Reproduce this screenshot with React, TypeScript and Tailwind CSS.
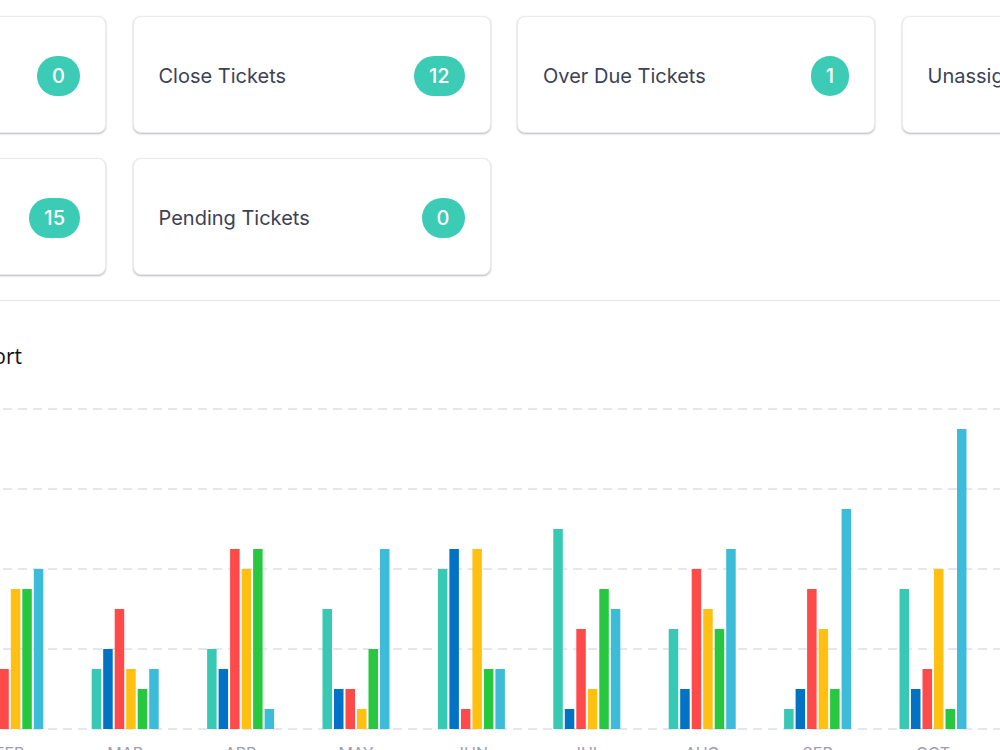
import React from "react";

type Stat = { label: string; count: number };

const topRow: Stat[] = [
  { label: "Open Tickets", count: 0 },
  { label: "Close Tickets", count: 12 },
  { label: "Over Due Tickets", count: 1 },
  { label: "Unassigned Tickets", count: 3 },
];

const bottomRow: Stat[] = [
  { label: "All Tickets", count: 15 },
  { label: "Pending Tickets", count: 0 },
];

const SERIES_COLORS = ["#38c9b4", "#0172c4", "#ff4a4a", "#ffc012", "#27c840", "#3dbcd9"];

const MONTHS = ["JAN", "FEB", "MAR", "APR", "MAY", "JUN", "JUL", "AUG", "SEP", "OCT", "NOV", "DEC"];

// ticket counts per month, one value per status series
const DATA: number[][] = [
  [2, 3, 1, 4, 2, 5],
  [5, 6, 3, 7, 7, 8],
  [3, 4, 6, 3, 2, 3],
  [4, 3, 9, 8, 9, 1],
  [6, 2, 2, 1, 4, 9],
  [8, 9, 1, 9, 3, 3],
  [10, 1, 5, 2, 7, 6],
  [5, 2, 8, 6, 5, 9],
  [1, 2, 7, 5, 2, 11],
  [7, 2, 3, 8, 1, 15],
  [4, 3, 6, 2, 5, 7],
  [3, 5, 2, 6, 4, 8],
];

function StatCard({ label, count }: Stat) {
  return (
    <div className="flex h-[117px] items-center justify-between rounded-[8px] border border-[#e9e9ef] bg-white pl-[25px] pr-[25px] pt-[3px] shadow-[0_1px_2px_rgba(0,0,0,0.28)]">
      <span className="text-[20px] tracking-[0px] text-[#3b4257]">{label}</span>
      <span className="flex h-[40px] min-w-[38px] items-center justify-center rounded-full bg-[#3ccbb4] px-[15px] text-[20px] font-medium text-white">
        {count}
      </span>
    </div>
  );
}

function TicketChart() {
  const width = 1600;
  const height = 400;
  const base = 359; // y of zero line
  const unit = 20; // px per ticket
  const groupStart = 91.7 + 252 - 2 * 115.4;
  const groupPitch = 115.4;
  const barPitch = 11.5;
  const barWidth = 9.5;
  const grid = [39, 119, 199, 279, 359];

  return (
    <svg width={width} height={height} className="block">
      {grid.map((y) => (
        <line
          key={y}
          x1={0}
          x2={width}
          y1={y}
          y2={y}
          stroke="#dedeea"
          strokeWidth={1.5}
          strokeDasharray="9 6"
        />
      ))}
      {DATA.map((vals, m) => {
        const gx = groupStart + m * groupPitch;
        return (
          <g key={MONTHS[m]}>
            {vals.map((v, s) => (
              <rect
                key={s}
                x={gx + s * barPitch}
                y={base - v * unit}
                width={barWidth}
                height={v * unit}
                fill={SERIES_COLORS[s]}
              />
            ))}
            <text
              x={gx + (5 * barPitch + barWidth) / 2}
              y={389}
              textAnchor="middle"
              fontSize={16}
              fill="#9c9cb2"
              fontFamily="Inter, 'Noto Sans', sans-serif"
            >
              {MONTHS[m]}
            </text>
          </g>
        );
      })}
    </svg>
  );
}

export default function App() {
  return (
    <div className="relative h-[750px] w-[1000px] overflow-hidden bg-white font-['Inter','Noto_Sans',sans-serif]">
      <div className="-ml-[252px] w-[1600px]">
        <div className="grid grid-cols-[358px_358px_358px_358px] gap-x-[26.5px] gap-y-[25px] pt-[16px]">
          {topRow.map((s) => (
            <StatCard key={s.label} {...s} />
          ))}
          {bottomRow.map((s) => (
            <StatCard key={s.label} {...s} />
          ))}
        </div>
        <div className="mt-[25px] border-t border-[#e6e6ea]">
          <div className="w-[274px] pt-[41px] text-right font-['Open_Sans',sans-serif] text-[21px] font-medium leading-[28px] text-[#111]">
            Ticket Report
          </div>
          <TicketChart />
        </div>
      </div>
    </div>
  );
}
